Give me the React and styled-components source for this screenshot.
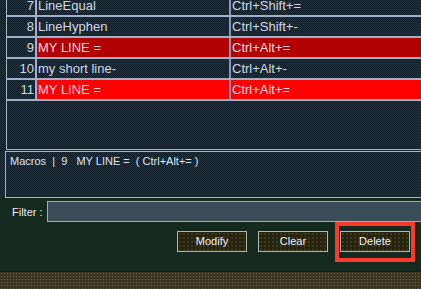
import React from 'react'
import styled, { createGlobalStyle } from 'styled-components'

const GlobalStyle = createGlobalStyle`
  html, body {
    margin: 0;
    padding: 0;
    width: 421px;
    height: 289px;
    overflow: hidden;
    background: #17291f;
  }
`

const rows = [
  { id: 7, name: 'LineEqual', keys: 'Ctrl+Shift+=' },
  { id: 8, name: 'LineHyphen', keys: 'Ctrl+Shift+-' },
  { id: 9, name: 'MY LINE =', keys: 'Ctrl+Alt+=', tone: 'dark' },
  { id: 10, name: 'my short line-', keys: 'Ctrl+Alt+-' },
  { id: 11, name: 'MY LINE =', keys: 'Ctrl+Alt+=', tone: 'bright' },
]

const toneBg = {
  dark: '#b00000',
  bright: '#ff0000',
}

const greenDither = 'repeating-conic-gradient(#1e3a1c 0 25%, #0f1e28 0 50%) 0 0 / 2px 2px'
const blueDither = 'repeating-conic-gradient(#0f2236 0 25%, #192c22 0 50%) 0 0 / 2px 2px'

export default function App() {
  return (
    <Screen>
      <GlobalStyle />
      <GridArea>
        <Rows>
          {rows.map((row) => (
            <Row key={row.id}>
              <NumCell>{row.id}</NumCell>
              <NameCell $bg={toneBg[row.tone]} $red={!!row.tone}>{row.name}</NameCell>
              <KeyCell $bg={toneBg[row.tone]} $red={!!row.tone}>{row.keys}</KeyCell>
            </Row>
          ))}
        </Rows>
      </GridArea>
      <StatusPanel>
        <StatusText>{'Macros  |  9   MY LINE =  ( Ctrl+Alt+= )'}</StatusText>
      </StatusPanel>
      <Lower>
        <FilterRow>
          <FilterLabel>Filter :</FilterLabel>
          <FilterInput />
        </FilterRow>
        <ButtonRow>
          <Button>Modify</Button>
          <Button>Clear</Button>
          <Highlight>
            <Button>Delete</Button>
          </Highlight>
        </ButtonRow>
      </Lower>
      <BottomStrip />
    </Screen>
  )
}

const Screen = styled.div`
  width: 421px;
  height: 289px;
  display: flex;
  flex-direction: column;
  overflow: hidden;
  background: ${greenDither};
  font-family: "Liberation Sans", Arial, sans-serif;
`

const GridArea = styled.div`
  height: 149px;
  margin-left: 6px;
  border-left: 1px solid #a8b4c0;
  border-bottom: 1px solid #a8b4c0;
  overflow: hidden;
  flex-shrink: 0;
`

const Rows = styled.div`
  margin-top: -4px;
  display: flex;
  flex-direction: column;
`

const Row = styled.div`
  display: grid;
  grid-template-columns: 30px 194px 1fr;
  height: 19px;
  border-bottom: 2px solid #a0b0c8;
  font-size: 13px;
  line-height: 19px;
  color: #d0d8e4;
`

const NumCell = styled.div`
  text-align: right;
  padding-right: 1px;
  border-right: 2px solid #a0b0c8;
`

const NameCell = styled.div`
  padding-left: 1px;
  border-right: 2px solid #8898b0;
  white-space: nowrap;
  background: ${(p) => p.$bg || 'transparent'};
  color: ${(p) => (p.$red ? '#f4d8e0' : '#d0d8e4')};
`

const KeyCell = styled.div`
  padding-left: 1px;
  white-space: nowrap;
  background: ${(p) => p.$bg || 'transparent'};
  color: ${(p) => (p.$red ? '#f4d8e0' : '#d0d8e4')};
`

const StatusPanel = styled.div`
  margin-top: 1px;
  margin-left: 5px;
  height: 45px;
  border: 1px solid #a8b4c0;
  border-right: none;
  flex-shrink: 0;
`

const StatusText = styled.div`
  padding: 3px 0 0 4px;
  font-size: 11px;
  line-height: 13px;
  color: #dce4f4;
  white-space: pre;
`

const Lower = styled.div`
  display: flex;
  flex-direction: column;
  padding-top: 3px;
  height: 70px;
  flex-shrink: 0;
  background: ${blueDither};
`

const FilterRow = styled.div`
  display: flex;
  align-items: center;
  height: 21px;
`

const FilterLabel = styled.div`
  width: 35px;
  padding-left: 12px;
  font-size: 11px;
  color: #e4ecfc;
`

const FilterInput = styled.div`
  flex: 1;
  height: 19px;
  margin-right: -4px;
  border: 1px solid #9cacc4;
  background: #3a4c58;
`

const ButtonRow = styled.div`
  display: flex;
  justify-content: flex-end;
  align-items: flex-start;
  gap: 11px;
  padding: 9px 6px 0 0;
`

const Button = styled.div`
  width: 68px;
  height: 19px;
  border: 1px solid #b4b8ac;
  background:
    radial-gradient(circle, #4a4628 0.6px, transparent 0.9px) 0 0 / 4px 4px,
    #26240e;
  color: #ecf0ff;
  font-size: 11px;
  line-height: 19px;
  text-align: center;
  cursor: pointer;
  user-select: none;
`

const Highlight = styled.div`
  margin: -9px 0 0 -4px;
  padding: 5px 1px 6px;
  border: 4px solid #ff3a2a;
`

const BottomStrip = styled.div`
  flex: 1;
  border-top: 1px solid #1c1a08;
  background:
    radial-gradient(circle, #6a6440 0.7px, transparent 1px) 0 0 / 3px 3px,
    #3a3620;
`
